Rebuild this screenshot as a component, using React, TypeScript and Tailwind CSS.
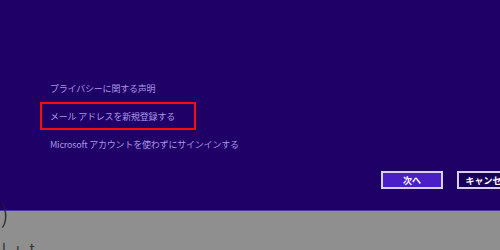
const font = { fontFamily: '"Noto Sans CJK JP", "Noto Sans", sans-serif' }

const links = [
  { label: 'プライバシーに関する声明', active: false },
  { label: 'メール アドレスを新規登録する', active: true },
  { label: 'Microsoft アカウントを使わずにサインインする', active: false },
]

export default function App() {
  return (
    <div className="w-[500px] h-[250px] overflow-hidden bg-[#8f8f8f] flex flex-col" style={font}>
      <div className="h-[210px] bg-[#1f0066] flex flex-col pt-[74px] shrink-0">
        <div className="flex flex-col pl-[40px]">
          {links.map(({ label, active }) => (
            <div
              key={label}
              className={
                'w-[156px] h-[28px] flex items-center pl-[8px] whitespace-nowrap border-2 ' +
                (active ? 'border-[#ff0a0a]' : 'border-transparent')
              }
            >
              <span className="text-[9px] leading-none text-[#a897e6] tracking-[-0.2px]">{label}</span>
            </div>
          ))}
        </div>
        <div className="flex gap-[14px] pl-[381px] mt-[13px]">
          <button className="w-[62px] h-[18px] shrink-0 border-2 border-[#d8d0f4] bg-[#4a20c6] text-white text-[9px] font-bold leading-none flex items-center justify-center">
            次へ
          </button>
          <button className="w-[62px] h-[18px] shrink-0 border-2 border-[#d8d0f4] bg-[#1a0058] text-white text-[9px] font-bold leading-none flex items-center justify-center">
            キャンセル
          </button>
        </div>
      </div>
      <div className="h-px bg-[#4a3a98] shrink-0" />
      <div className="relative flex-1">
        <span className="absolute left-[1px] top-[-10px] text-[24px] leading-none text-[#222] font-light">)</span>
        <span className="absolute left-[2px] top-[30px] text-[14px] leading-none text-[#333] tracking-[10px]">lıt</span>
      </div>
    </div>
  )
}
